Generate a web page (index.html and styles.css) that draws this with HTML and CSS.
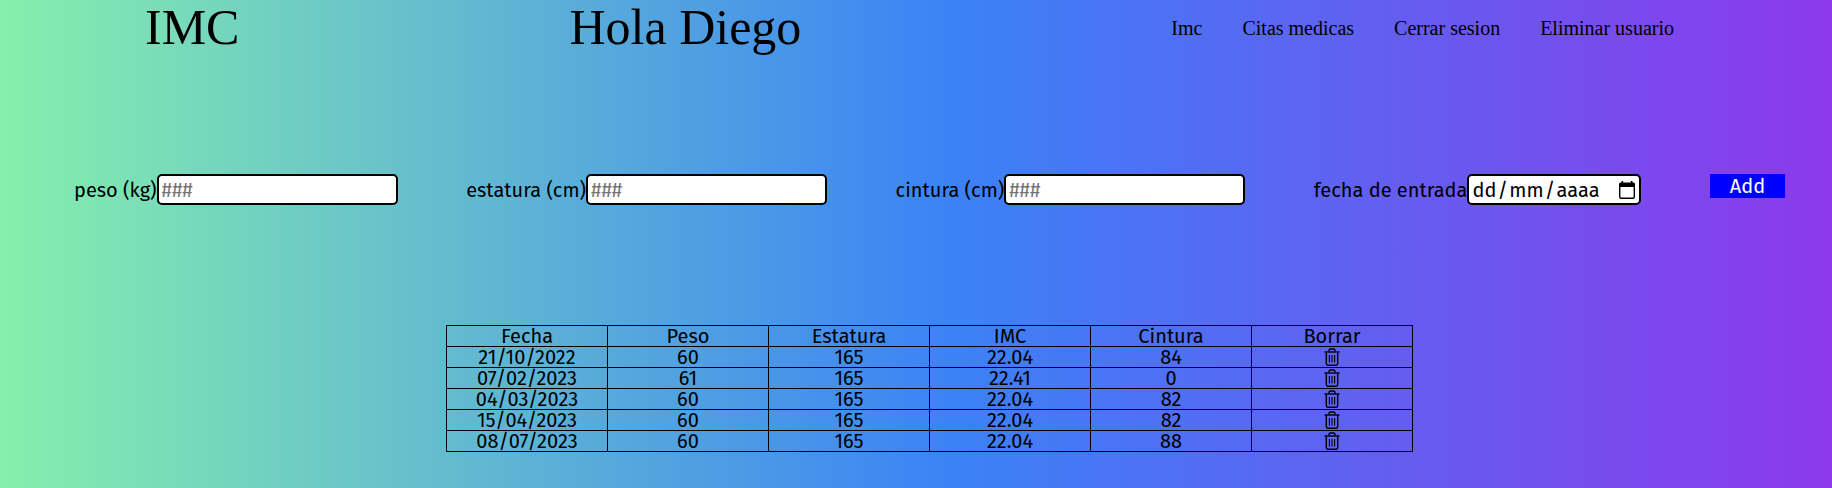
FILE: index.html
```html
<!DOCTYPE html>
<html lang="es">
<head>
<meta charset="utf-8">
<title>IMC</title>
<link rel="stylesheet" href="styles.css">
</head>
<body>
<svg class="sprite" aria-hidden="true">
  <symbol id="trash" viewBox="0 0 16 18">
    <g fill="none" stroke="currentColor">
      <path d="M0.5 4H15.5" stroke-width="1.4"/>
      <path d="M5 3.6V2.6Q5 1 6.5 1H9.5Q11 1 11 2.6V3.6" stroke-width="1.4"/>
      <path d="M2.3 4V15.6Q2.3 17.2 3.9 17.2H12.1Q13.7 17.2 13.7 15.6V4" stroke-width="1.4"/>
      <path d="M5.4 7V14.4M8 7V14.4M10.6 7V14.4" stroke-width="1.1"/>
    </g>
  </symbol>
</svg>
<header class="topbar">
  <h1 class="title">IMC</h1>
  <p class="title">Hola Diego</p>
  <nav>
    <ul class="menu">
      <li><a href="#">Imc</a></li>
      <li><a href="#">Citas medicas</a></li>
      <li><a href="#">Cerrar sesion</a></li>
      <li><a href="#">Eliminar usuario</a></li>
    </ul>
  </nav>
</header>
<main class="content">
  <form class="entry">
    <div class="field"><label for="peso">peso (kg)</label><input class="box" id="peso" type="text" placeholder="###"></div>
    <div class="field"><label for="estatura">estatura (cm)</label><input class="box" id="estatura" type="text" placeholder="###"></div>
    <div class="field"><label for="cintura">cintura (cm)</label><input class="box" id="cintura" type="text" placeholder="###"></div>
    <div class="field">
      <label for="fecha">fecha de entrada</label>
      <div class="box date">
        <input id="fecha" type="text" placeholder="dd&#8202;/&#8202;mm&#8202;/&#8202;aaaa">
        <button type="button" class="picker" aria-label="Abrir calendario">
          <svg viewBox="0 0 16 18" width="16" height="18" aria-hidden="true">
            <path d="M0.7 3.5V15.5Q0.7 17.3 2.2 17.3H13.8Q15.3 17.3 15.3 15.5V3.5" fill="none" stroke="currentColor" stroke-width="1.4"/>
            <path d="M0 6V3Q0 1.5 1.5 1.5H2.5V0H4.2V1.5H11.8V0H13.5V1.5H14.5Q16 1.5 16 3V6Z" fill="currentColor"/>
          </svg>
        </button>
      </div>
    </div>
    <button type="submit" class="add">Add</button>
  </form>
  <table class="records">
    <thead>
      <tr><th>Fecha</th><th>Peso</th><th>Estatura</th><th>IMC</th><th>Cintura</th><th>Borrar</th></tr>
    </thead>
    <tbody>
      <tr><td>21/10/2022</td><td>60</td><td>165</td><td>22.04</td><td>84</td><td><button type="button" class="delete" aria-label="Borrar"><svg class="icon"><use href="#trash"/></svg></button></td></tr>
      <tr><td>07/02/2023</td><td>61</td><td>165</td><td>22.41</td><td>0</td><td><button type="button" class="delete" aria-label="Borrar"><svg class="icon"><use href="#trash"/></svg></button></td></tr>
      <tr><td>04/03/2023</td><td>60</td><td>165</td><td>22.04</td><td>82</td><td><button type="button" class="delete" aria-label="Borrar"><svg class="icon"><use href="#trash"/></svg></button></td></tr>
      <tr><td>15/04/2023</td><td>60</td><td>165</td><td>22.04</td><td>82</td><td><button type="button" class="delete" aria-label="Borrar"><svg class="icon"><use href="#trash"/></svg></button></td></tr>
      <tr><td>08/07/2023</td><td>60</td><td>165</td><td>22.04</td><td>88</td><td><button type="button" class="delete" aria-label="Borrar"><svg class="icon"><use href="#trash"/></svg></button></td></tr>
    </tbody>
  </table>
</main>
</body>
</html>
```
FILE: styles.css
```css
*, *::before, *::after { box-sizing: border-box; margin: 0; padding: 0; }

body {
  min-height: 100vh;
  background: linear-gradient(to right, #86efac 0%, #3b82f6 52%, #9333ea 104%);
  color: #000;
  font: 20px/20px "Fira Sans", "Noto Sans", sans-serif;
}

button, input { font: inherit; color: inherit; border: 0; background: none; }
.sprite { display: none; }

.topbar {
  display: flex;
  justify-content: space-between;
  align-items: center;
  padding: 0 158px 0 145px;
  font-family: "Liberation Serif", serif;
}
.title { font-size: 50px; line-height: 55px; font-weight: 400; }
.menu { display: flex; list-style: none; }
.menu li { margin-left: 40px; }
.menu a { color: inherit; text-decoration: none; }

.content { padding: 119px 0 35px 27px; }

.entry {
  display: flex;
  justify-content: space-between;
  align-items: flex-start;
  padding: 0 47px;
}
.field { display: flex; align-items: center; }
.box {
  width: 241px;
  height: 31px;
  padding: 0 3px;
  border: 2px solid #000;
  border-radius: 5px;
  background: #fff;
}
.box::placeholder { color: #757575; }
.date { display: flex; align-items: center; justify-content: space-between; width: 174px; padding-right: 4px; }
.date input { width: 140px; }
.date input::placeholder { color: #000; }
.picker { display: flex; }
.add { width: 75px; height: 24px; background: #00f; color: #fff; text-align: center; }

.records {
  width: 967px;
  margin: 120px auto 0;
  border-collapse: collapse;
  table-layout: fixed;
}
.records th, .records td { height: 21px; border: 1px solid #000; font-weight: 400; text-align: center; }
.delete { display: block; margin: 0 auto; }
.icon { display: block; width: 16px; height: 18px; }
```
